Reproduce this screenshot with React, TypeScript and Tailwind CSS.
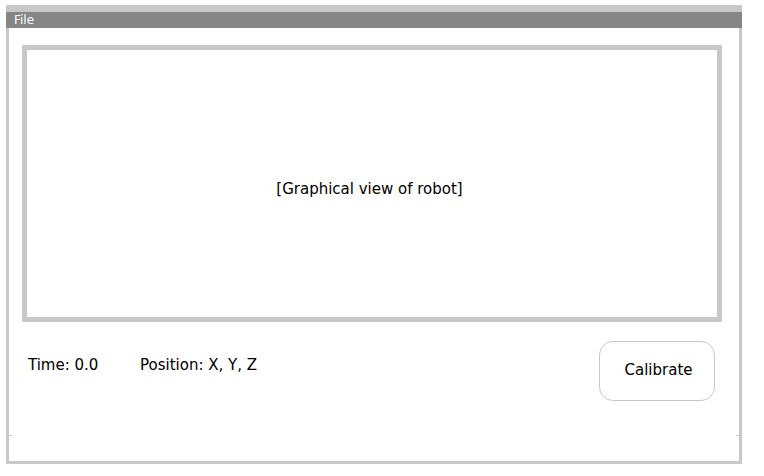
import React from "react";

export default function App() {
  return (
    <div className="w-[764px] h-[476px] bg-white pt-[5px] pl-[6px]" style={{ fontFamily: '"DejaVu Sans", Verdana, sans-serif' }}>
      <div className="w-[736px]">
        <div className="h-[7px] bg-[#c8c8c8]" />
        <div className="h-[16px] bg-[#868686] text-white text-[12px] leading-[16px] pl-[8px]">File</div>
        <div className="h-[436px] border-x-[3px] border-b-[3px] border-[#c8c8c8] flex flex-col">
          <div className="pt-[17px] pl-[13px]">
            <div className="w-[700px] h-[277px] border-[5px] border-[#c8c8c8] flex items-center justify-center pt-[10px] pr-[5px] text-[15px] leading-[20px] text-black">
              [Graphical view of robot]
            </div>
          </div>
          <div className="flex items-start pt-[19px] pl-[19px] pr-[24px] text-[15px] leading-[20px] text-black">
            <span className="mt-[14px] w-[112px]">Time: 0.0</span>
            <span className="mt-[14px]">Position: X, Y, Z</span>
            <div className="ml-auto w-[116px] h-[60px] pb-[3px] pl-[3px] border border-[#c8c8c8] rounded-[14px] flex items-center justify-center">
              Calibrate
            </div>
          </div>
          <div className="mt-[34px] flex justify-between">
            <span className="w-[3px] h-[1px] bg-[#c8c8c8]" />
            <span className="w-[3px] h-[1px] bg-[#c8c8c8]" />
          </div>
        </div>
      </div>
    </div>
  );
}
